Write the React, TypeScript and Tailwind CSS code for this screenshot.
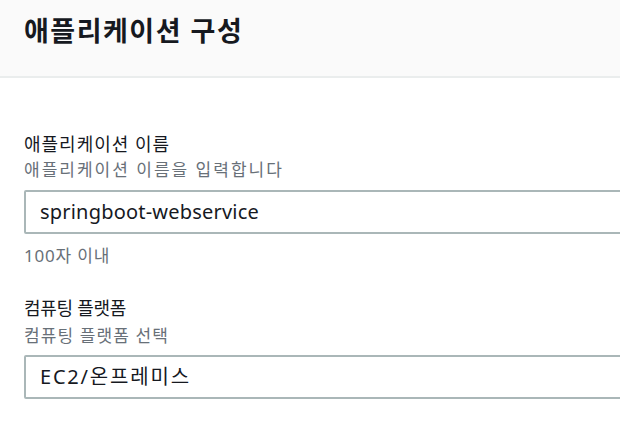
export default function App() {
  const font = { fontFamily: '"Noto Sans", "Noto Sans CJK KR", sans-serif' };
  return (
    <div className="w-[620px] h-[422px] overflow-hidden bg-white" style={font}>
      <div className="h-[78px] bg-[#fafafa] border-b-2 border-[#eaeded] pl-6 pt-[12px]">
        <h1 className="text-[27px] leading-[38px] font-bold tracking-[1.5px] text-[#16191f]">애플리케이션 구성</h1>
      </div>
      <div className="pl-6 pt-[54px]">
        <div className="text-[18px] leading-[24px] tracking-[1px] text-[#16191f]">애플리케이션 이름</div>
        <div className="text-[17px] leading-[22px] tracking-[2px] text-[#687078] mt-[3px]">애플리케이션 이름을 입력합니다</div>
        <div className="w-[800px] h-[44px] mt-[9px] border-2 border-[#aab7b8] rounded-[2px] flex items-center pl-[14px] text-[20px] tracking-[0.2px] text-[#16191f]">
          springboot-webservice
        </div>
        <div className="text-[17px] leading-[22px] tracking-[0.8px] text-[#687078] mt-[11px]">100자 이내</div>
        <div className="text-[18px] leading-[24px] tracking-[-0.3px] text-[#16191f] mt-[29px]">컴퓨팅 플랫폼</div>
        <div className="text-[17px] leading-[22px] tracking-[1.1px] text-[#687078] mt-[5px]">컴퓨팅 플랫폼 선택</div>
        <div className="w-[800px] h-[44px] mt-[8px] border-2 border-[#aab7b8] rounded-[2px] flex items-center pl-[14px] text-[20px] tracking-[1.8px] text-[#16191f]">
          EC2/온프레미스
        </div>
      </div>
    </div>
  );
}
